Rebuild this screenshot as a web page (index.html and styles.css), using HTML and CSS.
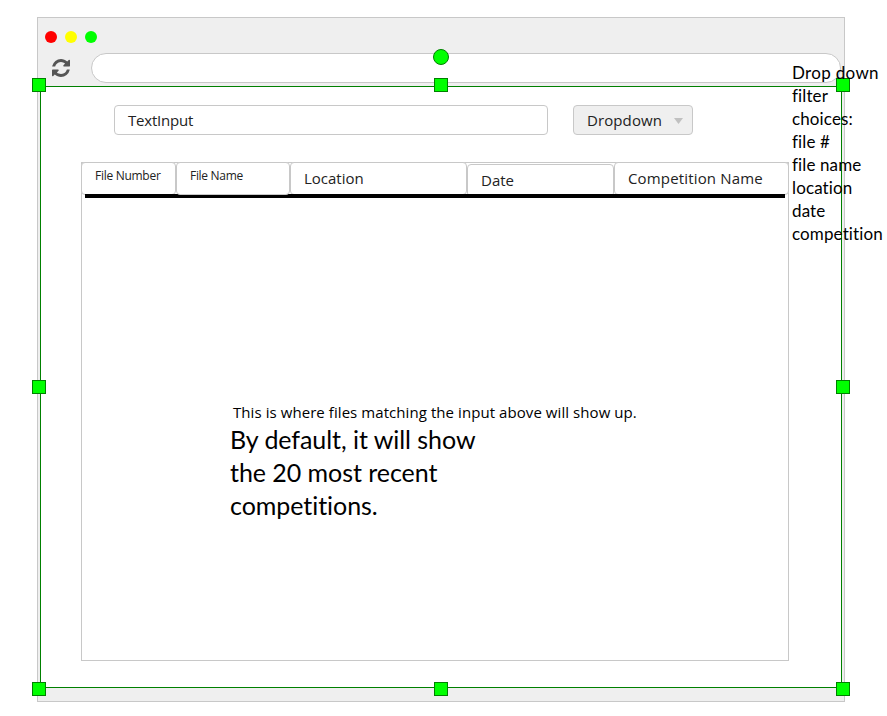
FILE: index.html
```html
<!DOCTYPE html>
<html lang="en">
<head>
<meta charset="utf-8">
<title>File search mockup</title>
<link rel="stylesheet" href="styles.css">
</head>
<body>
<div class="canvas">
  <main class="window">
    <header class="chrome">
      <div class="lights"><i class="red"></i><i class="yellow"></i><i class="green"></i></div>
      <div class="address">
        <svg class="reload" viewBox="0 0 1536 1536" aria-hidden="true"><path fill="#555" d="M1511 928q0 5-1 7-64 268-268 434.500T764 1536q-146 0-282.500-55T238 1324l-129 129q-19 19-45 19t-45-19-19-45V960q0-26 19-45t45-19h448q26 0 45 19t19 45-19 45l-137 137q71 66 161 102t187 36q134 0 250-65t186-179q11-17 53-117 8-23 30-23h192q13 0 22.500 9.500t9.500 22.500zm25-800v448q0 26-19 45t-45 19h-448q-26 0-45-19t-19-45 19-45l138-138Q969 256 768 256q-134 0-250 65T332 500q-11 17-53 117-8 23-30 23H50q-13 0-22.500-9.500T18 608v-7q65-268 270-434.500T768 0q146 0 284 55.500T1297 212l130-129q19-19 45-19t45 19 19 45z"/></svg>
        <div class="url"></div>
      </div>
    </header>
    <section class="page">
      <div class="filters">
        <div class="field"><span class="t-input">TextInput</span></div>
        <div class="select"><span class="t-drop">Dropdown</span><i class="caret"></i></div>
      </div>
      <div class="panel">
        <div class="head">
          <div class="cell number"><span>File Number</span></div>
          <div class="cell name"><span>File Name</span></div>
          <div class="cell location"><span>Location</span></div>
          <div class="cell date"><span>Date</span></div>
          <div class="cell competition"><span>Competition Name</span></div>
        </div>
        <div class="rule"></div>
        <p class="hint">This is where files matching the input above will show up.</p>
        <p class="default">By default, it will show<br>the 20 most recent<br>competitions.</p>
      </div>
    </section>
  </main>
  <div class="selection">
    <i class="rotate"></i>
    <i class="handle top left"></i><i class="handle top center"></i><i class="handle top right"></i>
    <i class="handle middle left"></i><i class="handle middle right"></i>
    <i class="handle bottom left"></i><i class="handle bottom center"></i><i class="handle bottom right"></i>
  </div>
  <aside class="note"><span class="first">Drop down</span><br>filter<br>choices:<br>file #<br>file name<br>location<br>date<br>competition</aside>
</div>
</body>
</html>
```
FILE: styles.css
```css
* { box-sizing: border-box; }
body { margin: 0; background: #fff; color: #222; font: 15px/20px "Open Sans", "Noto Sans", sans-serif; font-variant-ligatures: none; overflow: hidden; }
p { margin: 0; }
.canvas { position: relative; width: 887px; height: 716px; padding: 17px 0 0 37px; }
.window { width: 808px; height: 685px; border: 1px solid #c8c8c8; background: #efefef; padding: 0 2px; }
.chrome { height: 69px; padding: 13px 0 0 5px; }
.lights { display: flex; gap: 8px; height: 22px; }
.lights i { width: 12px; height: 12px; border-radius: 50%; }
.red { background: #f00; }
.yellow { background: #ff0; }
.green { background: #0f0; }
.address { display: flex; align-items: center; }
.reload { width: 18px; height: 18px; margin: 0 21px 0 7px; }
.url { width: 750px; height: 30px; flex: none; border: 1px solid #c8c8c8; border-radius: 15px; background: #fff; }
.page { height: 601px; background: #fff; padding: 18px 0 0 41px; }
.filters { display: flex; gap: 25px; margin-left: 33px; }
.field, .select { height: 30px; border: 1px solid #c8c8c8; border-radius: 4px; padding: 4px 13px; }
.field { width: 434px; }
.t-input { letter-spacing: -0.22px; }
.t-drop { letter-spacing: 0.1px; }
.select { width: 120px; background: #efefef; display: flex; justify-content: space-between; padding-right: 9px; }
.caret { width: 9px; height: 6px; margin-top: 8px; background: #c0c0c0; clip-path: polygon(0 0, 100% 0, 50% 100%); }
.panel { width: 708px; height: 499px; margin-top: 27px; border: 1px solid #c8c8c8; }
.head { display: flex; margin: -1px; height: 32px; }
.cell { flex: none; height: 33px; border: 1px solid #c8c8c8; border-radius: 4px; padding: 5px 13px; background: #fff; white-space: nowrap; }
.number { width: 95px; padding-top: 3px; font-size: 12px; letter-spacing: -0.28px; }
.name { width: 114px; padding-top: 3px; font-size: 12px; letter-spacing: -0.3px; position: relative; z-index: 1; }
.location { width: 177px; }
.date { width: 147px; margin-top: 2px; }
.competition { width: 175px; letter-spacing: 0.16px; }
.rule { height: 4px; margin: 1px 3px 0; background: #000; position: relative; }
.hint { margin: 204px 0 0 151px; color: #000; letter-spacing: 0.07px; }
.default { margin: 1px 0 0 148px; color: #000; font: 25px/33px Lato, sans-serif; font-variant-ligatures: none; letter-spacing: -0.05px; }
.note { position: absolute; left: 792px; top: 61px; color: #000; font: 17px/23px Lato, sans-serif; font-variant-ligatures: none; letter-spacing: 0.12px; white-space: nowrap; }
.first { letter-spacing: 0.32px; }
.selection { position: absolute; left: 40px; top: 86px; width: 802px; height: 602px; border: 1px solid #008000; }
.handle, .rotate { position: absolute; width: 14px; height: 14px; background: #0f0; border: 1px solid #008000; }
.rotate { width: 16px; height: 16px; border-radius: 50%; left: 392px; top: -38px; }
.top { top: -9px; }
.middle { top: 293px; }
.bottom { top: 595px; }
.left { left: -9px; }
.center { left: 393px; }
.right { left: 795px; }
```
